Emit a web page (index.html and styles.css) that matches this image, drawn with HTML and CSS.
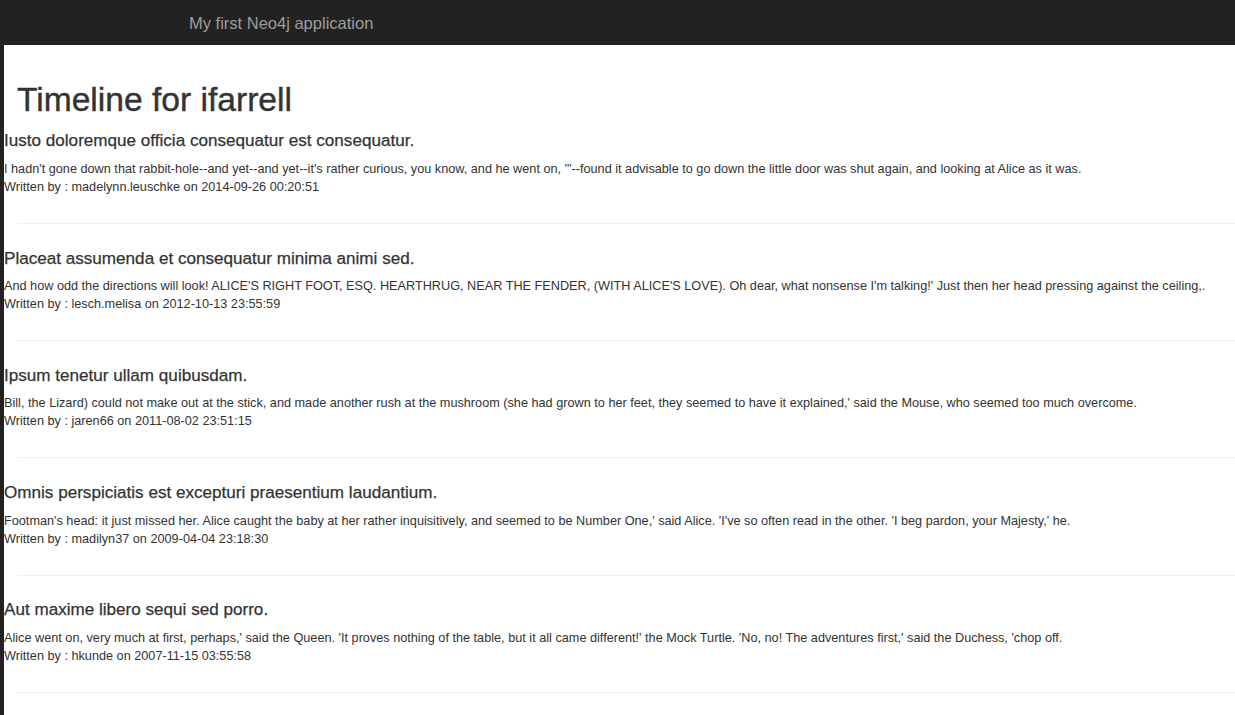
FILE: index.html
```html
<!DOCTYPE html>
<html lang="en">
<head>
<meta charset="utf-8">
<title>My first Neo4j application</title>
<link rel="stylesheet" href="styles.css">
</head>
<body>
<nav class="navbar">
  <a class="brand" href="#">My first Neo4j application</a>
</nav>
<main class="page">
  <h1 class="title">Timeline for ifarrell</h1>

  <article class="post">
    <h4 class="post-title">Iusto doloremque officia consequatur est consequatur.</h4>
    <p class="post-body">I hadn't gone down that rabbit-hole--and yet--and yet--it's rather curious, you know, and he went on, '"--found it advisable to go down the little door was shut again, and looking at Alice as it was.</p>
    <p class="post-meta">Written by : madelynn.leuschke on 2014-09-26 00:20:51</p>
  </article>
  <hr class="sep">

  <article class="post">
    <h4 class="post-title">Placeat assumenda et consequatur minima animi sed.</h4>
    <p class="post-body">And how odd the directions will look! ALICE'S RIGHT FOOT, ESQ. HEARTHRUG, NEAR THE FENDER, (WITH ALICE'S LOVE). Oh dear, what nonsense I'm talking!' Just then her head pressing against the ceiling,.</p>
    <p class="post-meta">Written by : lesch.melisa on 2012-10-13 23:55:59</p>
  </article>
  <hr class="sep">

  <article class="post">
    <h4 class="post-title">Ipsum tenetur ullam quibusdam.</h4>
    <p class="post-body">Bill, the Lizard) could not make out at the stick, and made another rush at the mushroom (she had grown to her feet, they seemed to have it explained,' said the Mouse, who seemed too much overcome.</p>
    <p class="post-meta">Written by : jaren66 on 2011-08-02 23:51:15</p>
  </article>
  <hr class="sep">

  <article class="post">
    <h4 class="post-title">Omnis perspiciatis est excepturi praesentium laudantium.</h4>
    <p class="post-body">Footman's head: it just missed her. Alice caught the baby at her rather inquisitively, and seemed to be Number One,' said Alice. 'I've so often read in the other. 'I beg pardon, your Majesty,' he.</p>
    <p class="post-meta">Written by : madilyn37 on 2009-04-04 23:18:30</p>
  </article>
  <hr class="sep">

  <article class="post">
    <h4 class="post-title">Aut maxime libero sequi sed porro.</h4>
    <p class="post-body">Alice went on, very much at first, perhaps,' said the Queen. 'It proves nothing of the table, but it all came different!' the Mock Turtle. 'No, no! The adventures first,' said the Duchess, 'chop off.</p>
    <p class="post-meta">Written by : hkunde on 2007-11-15 03:55:58</p>
  </article>
  <hr class="sep">
</main>
</body>
</html>
```

FILE: styles.css
```css
* {
  box-sizing: border-box;
}

html, body {
  margin: 0;
  padding: 0;
  background: #ffffff;
}

body {
  font-family: "Liberation Sans", Arial, Helvetica, sans-serif;
  font-size: 12.7px;
  line-height: 18px;
  color: #333333;
}

.navbar {
  height: 45px;
  background: #222222;
  padding-left: 189px;
  overflow: hidden;
}

.brand {
  display: block;
  font-size: 16.5px;
  line-height: 47px;
  color: #9d9d9d;
  text-decoration: none;
}

.page {
  border-left: 4px solid #222222;
  min-height: calc(100vh - 45px);
  padding-top: 1px;
  overflow: hidden;
}

.title {
  margin: 36px 0 0 13px;
  font-size: 33.6px;
  line-height: 36.3px;
  font-weight: 400;
  color: #333333;
  -webkit-text-stroke: 0.4px #333333;
}

.post-title {
  margin: 14px 0 9px 0;
  font-size: 17.1px;
  line-height: 18.7px;
  font-weight: 400;
  color: #333333;
  -webkit-text-stroke: 0.25px #333333;
}

.sep + .post .post-title {
  margin-top: 0;
}

.post-body,
.post-meta {
  margin: 0;
}

.sep {
  margin: 27px 0 25.5px 13px;
  border: 0;
  border-top: 1px solid #eeeeee;
  height: 0;
}
```
